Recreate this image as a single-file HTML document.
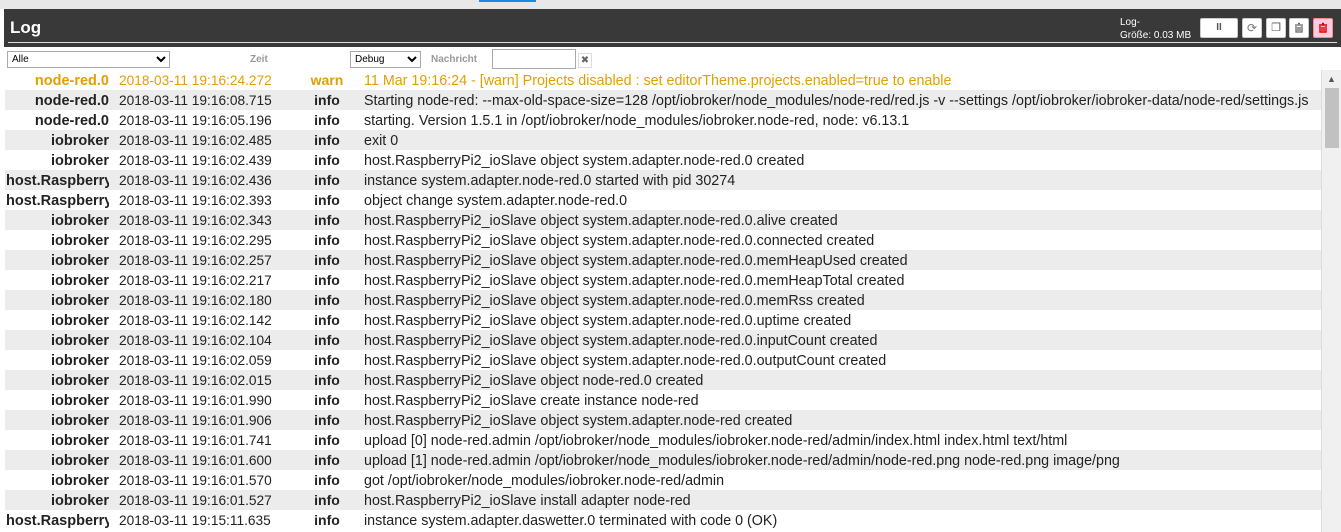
<!DOCTYPE html>
<html><head><meta charset="utf-8"><style>
*{box-sizing:border-box;margin:0;padding:0}
body{width:1341px;height:532px;overflow:hidden;background:#fff;font-family:"Liberation Sans",Arial,sans-serif;position:relative}
.top{position:absolute;left:0;top:0;width:1341px;height:9px;background:#e8e8e8}
.tab{position:absolute;left:479px;top:0;width:57px;height:2px;background:#1e88e5}
.hdr{position:absolute;left:4px;top:9px;width:1337px;height:38px;background:#393939}
.hdr h1{position:absolute;left:6px;top:9px;color:#fff;font-size:17px;font-weight:bold}
.hdr .ln{position:absolute;left:4px;right:4px;top:33px;height:1px;background:#ddd}
.sz{position:absolute;left:1116px;top:7px;color:#fff;font-size:10px;line-height:13px}
.b{position:absolute;top:9px;height:20px;background:#fff;border:1px solid #ccc;border-radius:2px}
.flt{position:absolute;top:51px;height:18px;font-size:10px}
select,.inp{border:1px solid #aaa;background:#fff;font-size:10px;height:17px}
.lbl{position:absolute;top:54px;font-size:10px;font-weight:bold;color:#999}
.rows{position:absolute;left:5px;top:70px;width:1316px}
.r{height:20px;line-height:20px;color:#222;display:flex;align-items:baseline;white-space:nowrap;overflow:hidden}
.r:nth-child(even){background:#ececec}
.s{flex:none;width:104px;font-weight:bold;text-align:right;overflow:hidden;font-size:14.5px}
.s.l{text-align:left;padding-left:1px}
.t{flex:none;margin-left:10px;width:188px;font-size:13.7px}
.v{flex:none;width:40px;text-align:center;font-weight:bold;font-size:14px}
.m{flex:none;margin-left:17px;font-size:14.3px}
.w{color:#e0a000}
.sb{position:absolute;left:1321px;top:70px;width:20px;height:462px;background:#f0f0f0;border-left:1px solid #ddd}
.th{position:absolute;left:3px;top:18px;width:14px;height:60px;background:#c1c1c1}
</style></head><body>
<div class="top"></div><div class="tab"></div>
<div class="hdr"><h1>Log</h1>
<div class="sz">Log-<br>Größe: 0.03 MB</div>
<div class="b" style="left:1196px;width:38px;font-size:10px;color:#555;text-align:center;line-height:18px;font-weight:bold">II</div>
<div class="b" style="left:1238px;width:20px;color:#777;font-size:12px;text-align:center;line-height:18px">⟳</div>
<div class="b" style="left:1262px;width:20px;color:#555;font-size:11px;text-align:center;line-height:18px">❐</div>
<div class="b" style="left:1285px;width:20px;"><svg width="18" height="18" viewBox="0 0 18 18"><path d="M5 6h8M8 4.5h2M6 7v6h6V7M8 8v4M10 8v4" stroke="#666" stroke-width="1.3" fill="none"/></svg></div>
<div class="b" style="left:1309px;width:20px;background:#fcd;border-color:#f88"><svg width="18" height="18" viewBox="0 0 18 18"><path d="M5 6h8M8 4.5h2M6 7v6h6V7M8 8v4M10 8v4" stroke="#d00" stroke-width="1.4" fill="none"/></svg></div>
<div class="ln"></div></div>
<div class="flt" style="left:7px"><select style="width:163px"><option>Alle</option></select></div>
<div class="lbl" style="left:250px">Zeit</div>
<div class="flt" style="left:350px"><select style="width:71px"><option>Debug</option></select></div>
<div class="lbl" style="left:431px">Nachricht</div>
<div class="flt" style="left:492px;top:49px"><div class="inp" style="width:84px;height:20px"></div></div>
<div style="position:absolute;left:578px;top:53px;width:14px;height:15px;border:1px solid #ddd;font-size:10px;color:#666;text-align:center;line-height:13px">✖</div>
<div class="rows">
<div class="r w"><span class="s">node-red.0</span><span class="t">2018-03-11 19:16:24.272</span><span class="v">warn</span><span class="m">11 Mar 19:16:24 - [warn] Projects disabled : set editorTheme.projects.enabled=true to enable</span></div>
<div class="r"><span class="s">node-red.0</span><span class="t">2018-03-11 19:16:08.715</span><span class="v">info</span><span class="m">Starting node-red: --max-old-space-size=128 /opt/iobroker/node_modules/node-red/red.js -v --settings /opt/iobroker/iobroker-data/node-red/settings.js</span></div>
<div class="r"><span class="s">node-red.0</span><span class="t">2018-03-11 19:16:05.196</span><span class="v">info</span><span class="m">starting. Version 1.5.1 in /opt/iobroker/node_modules/iobroker.node-red, node: v6.13.1</span></div>
<div class="r"><span class="s">iobroker</span><span class="t">2018-03-11 19:16:02.485</span><span class="v">info</span><span class="m">exit 0</span></div>
<div class="r"><span class="s">iobroker</span><span class="t">2018-03-11 19:16:02.439</span><span class="v">info</span><span class="m">host.RaspberryPi2_ioSlave object system.adapter.node-red.0 created</span></div>
<div class="r"><span class="s l">host.Raspberry</span><span class="t">2018-03-11 19:16:02.436</span><span class="v">info</span><span class="m">instance system.adapter.node-red.0 started with pid 30274</span></div>
<div class="r"><span class="s l">host.Raspberry</span><span class="t">2018-03-11 19:16:02.393</span><span class="v">info</span><span class="m">object change system.adapter.node-red.0</span></div>
<div class="r"><span class="s">iobroker</span><span class="t">2018-03-11 19:16:02.343</span><span class="v">info</span><span class="m">host.RaspberryPi2_ioSlave object system.adapter.node-red.0.alive created</span></div>
<div class="r"><span class="s">iobroker</span><span class="t">2018-03-11 19:16:02.295</span><span class="v">info</span><span class="m">host.RaspberryPi2_ioSlave object system.adapter.node-red.0.connected created</span></div>
<div class="r"><span class="s">iobroker</span><span class="t">2018-03-11 19:16:02.257</span><span class="v">info</span><span class="m">host.RaspberryPi2_ioSlave object system.adapter.node-red.0.memHeapUsed created</span></div>
<div class="r"><span class="s">iobroker</span><span class="t">2018-03-11 19:16:02.217</span><span class="v">info</span><span class="m">host.RaspberryPi2_ioSlave object system.adapter.node-red.0.memHeapTotal created</span></div>
<div class="r"><span class="s">iobroker</span><span class="t">2018-03-11 19:16:02.180</span><span class="v">info</span><span class="m">host.RaspberryPi2_ioSlave object system.adapter.node-red.0.memRss created</span></div>
<div class="r"><span class="s">iobroker</span><span class="t">2018-03-11 19:16:02.142</span><span class="v">info</span><span class="m">host.RaspberryPi2_ioSlave object system.adapter.node-red.0.uptime created</span></div>
<div class="r"><span class="s">iobroker</span><span class="t">2018-03-11 19:16:02.104</span><span class="v">info</span><span class="m">host.RaspberryPi2_ioSlave object system.adapter.node-red.0.inputCount created</span></div>
<div class="r"><span class="s">iobroker</span><span class="t">2018-03-11 19:16:02.059</span><span class="v">info</span><span class="m">host.RaspberryPi2_ioSlave object system.adapter.node-red.0.outputCount created</span></div>
<div class="r"><span class="s">iobroker</span><span class="t">2018-03-11 19:16:02.015</span><span class="v">info</span><span class="m">host.RaspberryPi2_ioSlave object node-red.0 created</span></div>
<div class="r"><span class="s">iobroker</span><span class="t">2018-03-11 19:16:01.990</span><span class="v">info</span><span class="m">host.RaspberryPi2_ioSlave create instance node-red</span></div>
<div class="r"><span class="s">iobroker</span><span class="t">2018-03-11 19:16:01.906</span><span class="v">info</span><span class="m">host.RaspberryPi2_ioSlave object system.adapter.node-red created</span></div>
<div class="r"><span class="s">iobroker</span><span class="t">2018-03-11 19:16:01.741</span><span class="v">info</span><span class="m">upload [0] node-red.admin /opt/iobroker/node_modules/iobroker.node-red/admin/index.html index.html text/html</span></div>
<div class="r"><span class="s">iobroker</span><span class="t">2018-03-11 19:16:01.600</span><span class="v">info</span><span class="m">upload [1] node-red.admin /opt/iobroker/node_modules/iobroker.node-red/admin/node-red.png node-red.png image/png</span></div>
<div class="r"><span class="s">iobroker</span><span class="t">2018-03-11 19:16:01.570</span><span class="v">info</span><span class="m">got /opt/iobroker/node_modules/iobroker.node-red/admin</span></div>
<div class="r"><span class="s">iobroker</span><span class="t">2018-03-11 19:16:01.527</span><span class="v">info</span><span class="m">host.RaspberryPi2_ioSlave install adapter node-red</span></div>
<div class="r"><span class="s l">host.Raspberry</span><span class="t">2018-03-11 19:15:11.635</span><span class="v">info</span><span class="m">instance system.adapter.daswetter.0 terminated with code 0 (OK)</span></div>
</div>
<div class="sb"><div style="position:absolute;left:5px;top:4px;font-size:9px;color:#555">▲</div><div class="th"></div></div>
</body></html>
